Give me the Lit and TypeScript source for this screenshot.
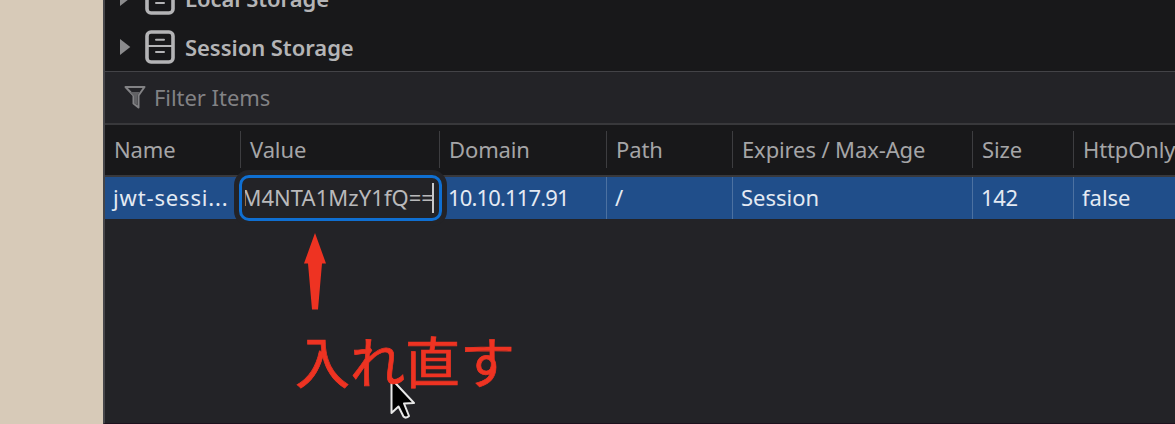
import { css, html, LitElement } from "lit";
import { customElement, property } from "lit/decorators.js";

interface Column {
	id: string;
	label: string;
	value: string;
}

const COLUMNS: Column[] = [
	{ id: "name", label: "Name", value: "jwt-sessi..." },
	{ id: "value", label: "Value", value: "M4NTA1MzY1fQ==" },
	{ id: "domain", label: "Domain", value: "10.10.117.91" },
	{ id: "path", label: "Path", value: "/" },
	{ id: "expires", label: "Expires / Max-Age", value: "Session" },
	{ id: "size", label: "Size", value: "142" },
	{ id: "http", label: "HttpOnly", value: "false" },
];

/** One collapsed entry of the storage tree. */
@customElement("storage-tree-item")
export class StorageTreeItem extends LitElement {
	static override styles = css`
		:host {
			display: flex;
			flex: none;
			align-items: center;
			height: 49px;
			padding-left: 14px;
			color: #b4b4b6;
			font-size: 22px;
			font-weight: 600;
			white-space: nowrap;
		}

		.twisty {
			width: 12px;
			height: 18px;
			margin-right: 14px;
			fill: #8b8b8d;
		}

		.store {
			width: 30px;
			height: 34px;
			margin-right: 10px;
			fill: none;
			stroke: #b4b4b6;
		}

		.label {
			letter-spacing: -0.05px;
		}
	`;

	@property({ type: String }) label = "";

	override render() {
		return html`
			<svg class="twisty" viewBox="0 0 12 18"><path d="M1 1v16L11.300 9z" /></svg>
			<svg class="store" viewBox="0 0 30 34">
				<rect x="2" y="2" width="26" height="30" rx="4" stroke-width="3.600" />
				<path d="M3 16h24" stroke-width="2" />
				<path d="M11 9.700h8M11 22h8" stroke-width="2" stroke-linecap="round" />
			</svg>
			<span class="label">${this.label}</span>
		`;
	}
}

/** Cookie table with its value cell in edit mode. */
@customElement("cookie-table")
export class CookieTable extends LitElement {
	static override styles = css`
		:host {
			display: block;
			font-size: 22px;
		}

		.row {
			display: grid;
			grid-template-columns: 135px 199px 167px 126px 240px 101px 102px;
			white-space: nowrap;
		}

		.head {
			height: 54px;
			border-top: 2px solid #38383b;
			border-bottom: 2px solid #38383b;
			box-sizing: border-box;
			padding: 6px 0 7px;
			background: #18181a;
			color: #a5a5a7;
		}

		.body {
			height: 42px;
			background: #204e8a;
			color: #e4eaf3;
		}

		.cell {
			min-width: 0;
			padding-left: 9px;
			border-left: 1px solid #3d3d40;
			letter-spacing: -0.12px;
		}

		.head .cell {
			line-height: 37px;
		}

		.body .cell {
			height: 42px;
			box-sizing: border-box;
			padding-left: 8px;
			border-left-color: #4c71a1;
			line-height: 41px;
			letter-spacing: 0;
		}

		.head .cell.name {
			border-left-color: transparent;
			padding-left: 8px;
		}

		.body .cell.name {
			border-left: 0;
			letter-spacing: 0.85px;
		}

		.body .cell.value,
		.body .cell.domain {
			border-left: 0;
		}

		.body .cell.value {
			padding: 0;
		}

		.body .cell.domain {
			padding-left: 9px;
			letter-spacing: -0.85px;
		}

		.body .cell.size {
			letter-spacing: -0.3px;
		}

		/* The editor is a little larger than the cell it stands in */
		.editor {
			display: flex;
			justify-content: flex-end;
			box-sizing: border-box;
			width: 203px;
			height: 46px;
			margin: -2px 0 0 -1px;
			padding: 0 5px 0 3px;
			border: 3px solid #0f6fd2;
			border-radius: 10px;
			background: #232327;
			box-shadow: 0 0 0 5px #232327;
			color: #b9b9bb;
			line-height: 39px;
			position: relative;
		}

		.clip {
			display: flex;
			flex: 1;
			min-width: 0;
			justify-content: flex-end;
			overflow: hidden;
			letter-spacing: 0.05px;
		}

		.caret {
			flex: none;
			width: 2px;
			height: 30px;
			margin: 5px 0 0 -2px;
			background: #c8c8ca;
		}
	`;

	private renderValue(column: Column) {
		if (column.id !== "value") {
			return column.value;
		}
		return html`<div class="editor"><span class="clip">${column.value}</span><span class="caret"></span></div>`;
	}

	override render() {
		return html`
			<div class="row head">
				${COLUMNS.map((c) => html`<div class="cell ${c.id}">${c.label}</div>`)}
			</div>
			<div class="row body">
				${COLUMNS.map((c) => html`<div class="cell ${c.id}">${this.renderValue(c)}</div>`)}
			</div>
		`;
	}
}

@customElement("app-root")
export class AppRoot extends LitElement {
	static override styles = css`
		:host {
			display: flex;
			position: relative;
			box-sizing: border-box;
			width: 1175px;
			height: 424px;
			padding-left: 103px;
			overflow: hidden;
			background: #d7cab8;
			font-family: "Noto Sans", "Noto Sans CJK JP", sans-serif;
		}

		.panel {
			flex: 1;
			min-width: 0;
			box-sizing: border-box;
			border-left: 2px solid #46464a;
			border-bottom: 1px solid #1c111d;
			background: #232327;
		}

		.tree {
			display: flex;
			flex-direction: column;
			justify-content: flex-end;
			box-sizing: border-box;
			height: 71px;
			overflow: hidden;
			background: #18181a;
		}

		.filter {
			display: flex;
			align-items: center;
			box-sizing: border-box;
			height: 52px;
			padding: 0 0 2px 19px;
			border-top: 1px solid #434347;
			color: #828285;
			font-size: 22px;
			letter-spacing: -0.05px;
		}

		.funnel {
			width: 22px;
			height: 24px;
			margin-right: 8px;
		}

		.arrow {
			position: absolute;
			left: 304px;
			top: 233px;
			width: 22px;
			height: 77px;
			fill: #ee3322;
		}

		.note {
			position: absolute;
			left: 295px;
			top: 319px;
			color: #ee3322;
			font-family: "Noto Sans CJK JP", sans-serif;
			font-size: 55px;
			font-weight: 400;
			line-height: 80px;
			white-space: nowrap;
			-webkit-text-stroke: 0.700px #ee3322;
		}

		.pointer {
			position: absolute;
			left: 389px;
			top: 376px;
			width: 28px;
			height: 44px;
		}
	`;

	override render() {
		return html`
			<div class="panel">
				<div class="tree">
					<storage-tree-item label="Local Storage"></storage-tree-item>
					<storage-tree-item label="Session Storage"></storage-tree-item>
				</div>
				<div class="filter">
					<svg class="funnel" viewBox="0 0 22 24">
						<path d="M1.500 2h19l-6 8.500v12l-5-4v-8z" fill="none" stroke="#828285" stroke-width="2" stroke-linejoin="round" />
						<path d="M6 7h10l-3 4v9l-3-2v-7z" fill="#626265" />
					</svg>
					<span>Filter Items</span>
				</div>
				<cookie-table></cookie-table>
			</div>
			<svg class="pointer" viewBox="0 0 28 44">
				<path
					d="M2.500 3v34l7-6.500 5 10q2.500 2.500 5.500-.5L15 27.500l10-.5z"
					fill="#000"
					stroke="#e8e8e8"
					stroke-width="2"
					stroke-linejoin="round"
				/>
			</svg>
			<svg class="arrow" viewBox="0 0 22 77">
				<path d="M11 0l11 30.500h-4L14 76.500H8L4 30.500H0z" />
			</svg>
			<div class="note">入れ直す</div>
		`;
	}
}

declare global {
	interface HTMLElementTagNameMap {
		"app-root": AppRoot;
		"cookie-table": CookieTable;
		"storage-tree-item": StorageTreeItem;
	}
}
